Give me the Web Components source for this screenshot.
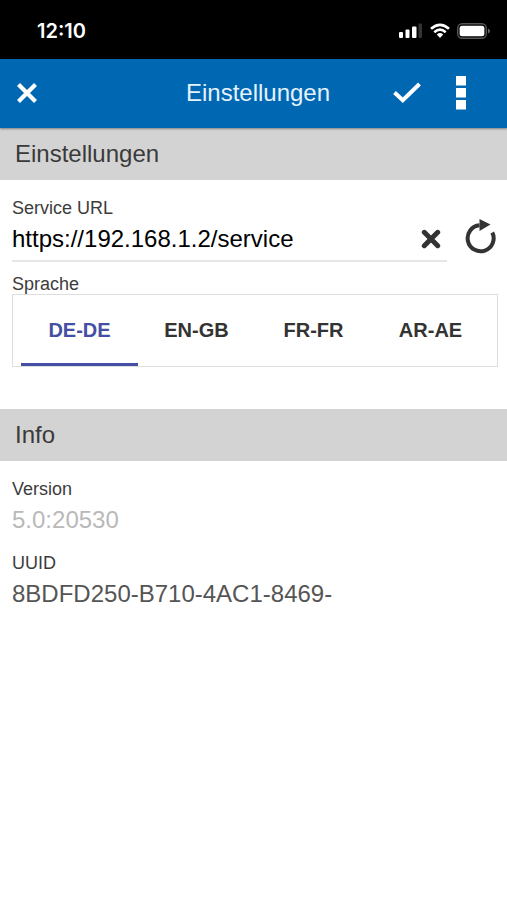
<!DOCTYPE html>
<html lang="de">
<head>
<meta charset="utf-8">
<meta name="viewport" content="width=device-width, initial-scale=1">
<title>Einstellungen</title>
<style>
  html { background: #fff; }
  body { margin: 0; font-family: "Liberation Sans", Arial, sans-serif; color: #333; }
</style>
</head>
<body>
<settings-page></settings-page>

<script>
const define = (name, html, setup) => {
  const template = document.createElement('template');
  template.innerHTML = '<style>*{box-sizing:border-box}svg{display:block}button{font:inherit;color:inherit;background:none;border:0;padding:0;cursor:pointer}</style>' + html;
  customElements.define(name, class extends HTMLElement {
    constructor() {
      super();
      this.attachShadow({ mode: 'open' }).append(template.content.cloneNode(true));
    }
    connectedCallback() {
      if (setup) setup(this, this.shadowRoot);
    }
  });
};

define('status-bar', `
  <style>
    :host { display: flex; justify-content: space-between; align-items: center; height: 59px;
      padding: 3px 17px 0 37px; box-sizing: border-box; background: #000; color: #fff;
      font: 600 20px/24px Inter, sans-serif; }
    div { display: flex; align-items: center; gap: 7px; }
  </style>
  <time>12:10</time>
  <div>
    <svg width="24" height="16" viewBox="0 0 24 16" fill="#fff" aria-hidden="true">
      <rect x="0" y="9" width="4" height="6" rx="1"/><rect x="6.500" y="6.500" width="4" height="8.500" rx="1"/>
      <rect x="13" y="3.500" width="4.500" height="11.500" rx="1"/><rect x="19.500" y="0.500" width="3.500" height="14.500" rx="1" fill="#333"/>
    </svg>
    <svg width="20" height="16" viewBox="0 0 20 16" fill="none" stroke="#fff" stroke-width="2.600" aria-hidden="true">
      <path d="M1 5.800Q10-2.200 19 5.800"/><path d="M4.300 9.200Q10 4.200 15.700 9.200"/>
      <path d="M6.800 11.500Q10 8.700 13.200 11.500L10 15Z" fill="#fff" stroke="none"/>
    </svg>
    <svg width="33" height="16" viewBox="0 0 33 16" aria-hidden="true">
      <rect x="0.700" y="0.700" width="28.600" height="14.600" rx="4.500" fill="none" stroke="#555" stroke-width="1.400"/>
      <rect x="2.600" y="2.700" width="24.800" height="10.600" rx="2.500" fill="#fff"/>
      <path d="M31 5.500Q33 6.500 33 8T31 10.500Z" fill="#666"/>
    </svg>
  </div>`);

define('app-header', `
  <style>
    :host { display: grid; grid-template-columns: 1fr auto 1fr; align-items: center; height: 69px;
      padding: 0 0 2px 9px; box-sizing: border-box; background: #0067b3; color: #fff;
      box-shadow: 0 1px 2px #0006; position: relative; }
    h1 { margin: 0; font-size: 24px; line-height: 32px; font-weight: 400; color: #e4f3fc; }
    button { display: grid; place-items: center; height: 48px; width: 54px; }
    .close { width: 36px; }
    div { display: flex; justify-content: flex-end; padding-right: 19px; }
  </style>
  <button class="close" type="button" aria-label="Schließen">
    <svg width="20" height="20" viewBox="0 0 20 20" stroke="#fff" stroke-width="4.200"><path d="M1.500 1.500 18.500 18.500M18.500 1.500 1.500 18.500"/></svg>
  </button>
  <h1><slot></slot></h1>
  <div>
    <button type="button" aria-label="Speichern">
      <svg width="28" height="22" viewBox="0 0 28 22" fill="none" stroke="#fff" stroke-width="4"><path d="M1.500 10.500 9.800 18.300 26.500 2"/></svg>
    </button>
    <button type="button" aria-label="Menü">
      <svg width="10" height="34" viewBox="0 0 10 34" fill="#fff"><path d="M0 0H10V9.500H0ZM0 12H10V21.500H0ZM0 24H10V33.500H0Z"/></svg>
    </button>
  </div>`);

define('section-title', `
  <style>
    :host { display: block; background: #d3d3d3; padding: 10px 15px; }
    h2 { margin: 0; font-size: 24px; line-height: 32px; font-weight: 400; color: #3a3a3a; }
  </style>
  <h2><slot></slot></h2>`);

define('text-field', `
  <style>
    :host { display: block; color: #3c3c3c; }
    label { display: block; font-size: 18px; line-height: 20px; }
    .row { display: flex; align-items: flex-start; gap: 15px; }
    .box { flex: 1; min-width: 0; display: flex; align-items: center; height: 42px; }
    input { flex: 1; min-width: 0; width: 100%; height: 42px; padding: 0; border: 0; outline: 0;
      background: none; font: 24px "Liberation Sans", Arial, sans-serif; color: #555; }
    input:disabled { color: #b9b9b9; }
    button { display: none; place-items: center; height: 38px; }
    :host([editable]) .box { height: 44px; border-bottom: 2px solid #e6e6e6; }
    :host([editable]) input { color: #000; }
    :host([editable]) button { display: grid; }
    .clear { width: 32px; }
    .reload { width: 36px; }
  </style>
  <label for="value"></label>
  <div class="row">
    <div class="box">
      <input id="value" type="text">
      <button class="clear" type="button" aria-label="Leeren">
        <svg width="20" height="20" viewBox="0 0 20 20" stroke="#333" stroke-width="5" stroke-linecap="round"><path d="M3.300 3.300 16.700 16.700M16.700 3.300 3.300 16.700"/></svg>
      </button>
    </div>
    <button class="reload" type="button" aria-label="Neu laden">
      <svg width="32" height="36" viewBox="0 0 32 36"><path d="M15.500 6.300A13 13 0 1 0 28.300 13.500" fill="none" stroke="#333" stroke-width="4"/><path d="M15.500 0 26.500 5.600 15.500 12Z" fill="#333"/></svg>
    </button>
  </div>`, (host, root) => {
    const input = root.querySelector('input');
    root.querySelector('label').textContent = host.getAttribute('label');
    input.value = host.getAttribute('value');
    input.disabled = host.hasAttribute('disabled');
    input.readOnly = !host.hasAttribute('editable');
    root.querySelector('.clear').onclick = () => { input.value = ''; input.focus(); };
    if (!host.hasAttribute('editable')) root.querySelectorAll('button').forEach(b => b.remove());
  });

define('language-tabs', `
  <style>
    :host { display: block; color: #3c3c3c; }
    .label { font-size: 18px; line-height: 20px; }
    .tabs { display: grid; grid-template-columns: repeat(4, 1fr); padding: 0 8px; border: 1px solid #dedede; }
    button { height: 71px; border-bottom: 3px solid transparent; padding-top: 2px;
      font-weight: 700; font-size: 20px; line-height: 24px; color: #333; }
    button[aria-selected="true"] { color: #444fa3; border-color: #444fa3; }
  </style>
  <div class="label" id="label">Sprache</div>
  <div class="tabs" role="tablist" aria-labelledby="label">
    <button type="button" role="tab" aria-selected="true">DE-DE</button>
    <button type="button" role="tab" aria-selected="false">EN-GB</button>
    <button type="button" role="tab" aria-selected="false">FR-FR</button>
    <button type="button" role="tab" aria-selected="false">AR-AE</button>
  </div>`, (host, root) => {
    const tabs = root.querySelectorAll('button');
    tabs.forEach(tab => tab.onclick = () => tabs.forEach(t => t.setAttribute('aria-selected', t === tab)));
  });

define('settings-page', `
  <style>
    :host { display: block; }
    .group { display: grid; gap: 12px; padding: 18px 9px 42px 12px; }
  </style>
  <status-bar></status-bar>
  <app-header>Einstellungen</app-header>
  <main>
    <section-title>Einstellungen</section-title>
    <div class="group">
      <text-field label="Service URL" value="https://192.168.1.2/service" editable></text-field>
      <language-tabs></language-tabs>
    </div>
    <section-title>Info</section-title>
    <div class="group">
      <text-field label="Version" value="5.0:20530" disabled></text-field>
      <text-field label="UUID" value="8BDFD250-B710-4AC1-8469-"></text-field>
    </div>
  </main>`);
</script>
</body>
</html>
